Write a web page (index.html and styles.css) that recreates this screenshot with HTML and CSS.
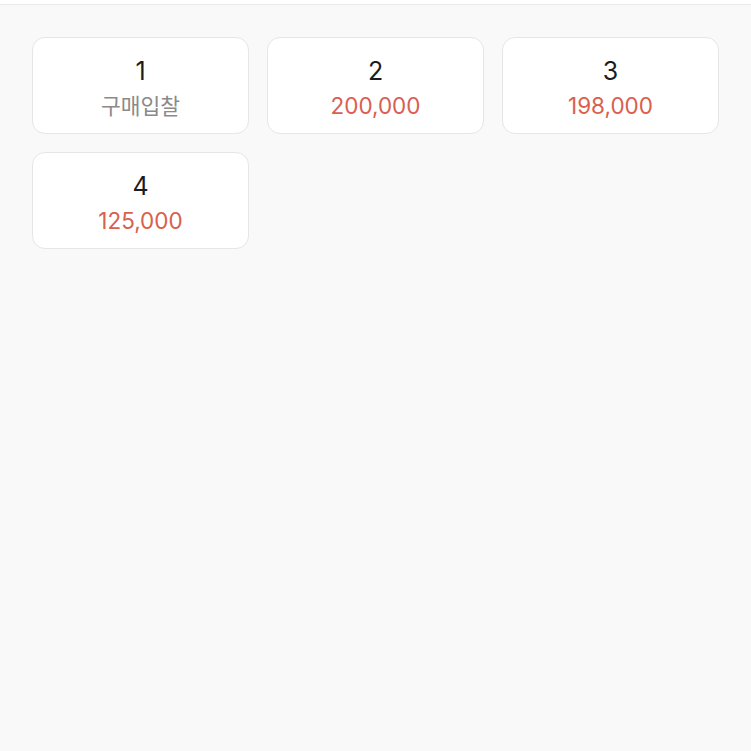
FILE: index.html
```html
<!DOCTYPE html>
<html lang="ko">
<head>
<meta charset="utf-8">
<link rel="stylesheet" href="styles.css">
</head>
<body>
<div class="topbar"></div>
<main class="grid">
  <div class="card">
    <div class="num">1</div>
    <div class="label">구매입찰</div>
  </div>
  <div class="card">
    <div class="num">2</div>
    <div class="price">200,000</div>
  </div>
  <div class="card">
    <div class="num">3</div>
    <div class="price">198,000</div>
  </div>
  <div class="card">
    <div class="num">4</div>
    <div class="price">125,000</div>
  </div>
</main>
</body>
</html>
```
FILE: styles.css
```css
html, body {
  margin: 0;
  padding: 0;
}
body {
  background: #f9f9f9;
  font-family: Inter, "Noto Sans CJK KR", sans-serif;
  min-height: 751px;
}
.topbar {
  height: 4px;
  background: #ffffff;
  border-bottom: 1px solid #e9e9e9;
}
.grid {
  display: grid;
  grid-template-columns: repeat(3, 217px);
  column-gap: 18px;
  row-gap: 18px;
  padding: 32px 32px 0 32px;
}
.card {
  background: #ffffff;
  border: 1px solid #e6e6e6;
  border-radius: 13px;
  display: flex;
  flex-direction: column;
  align-items: center;
  padding: 18px 0 13px;
}
.num {
  font-size: 25px;
  line-height: 30px;
  color: #1c1c1c;
}
.label, .price {
  margin-top: 6px;
  line-height: 28px;
}
.label {
  font-size: 21.5px;
  color: #8a8a8a;
}
.price {
  font-size: 22.5px;
  color: #d8604f;
}
```
